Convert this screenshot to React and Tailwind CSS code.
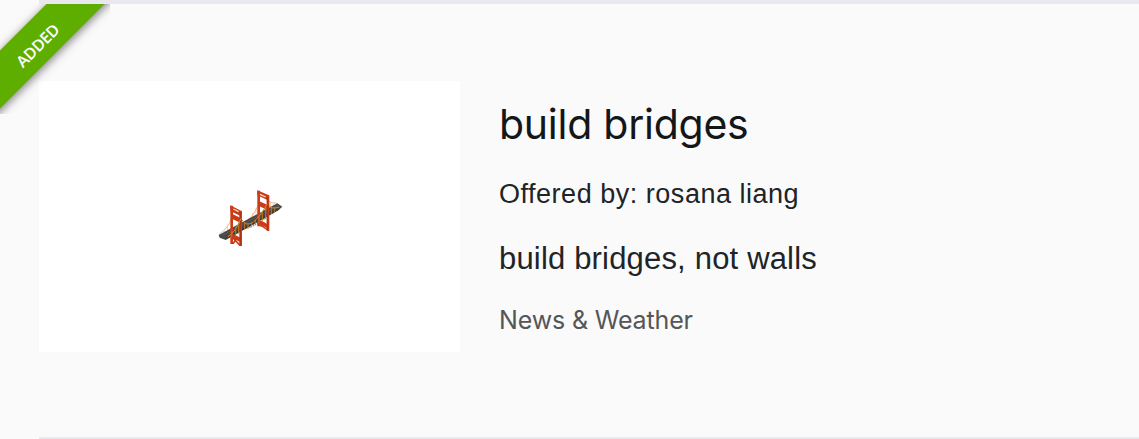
function BridgeIcon() {
  return (
    <svg width="80" height="75" viewBox="0 0 240 225" fill="none" className="mt-[3px] ml-px">
      {/* far cables */}
      <path d="M27 160Q54 142 65 112M97 130Q132 108 145 70M174 60Q190 68 200 66" stroke="#f5b87c" strokeWidth="3" />
      <path d="M43 150v10M53 138v18M106 123v10M117 110v16M128 97v22M138 82v28M182 65v18M190 68v12" stroke="#f0b077" strokeWidth="2" />

      {/* deck */}
      <path d="M26 162L202 67L217 77L205 88L47 177L29 170Z" fill="#484848" />
      <path d="M36 164L204 73" stroke="#5c5650" strokeWidth="3" />
      <path d="M47 173L207 84" stroke="#343a3d" strokeWidth="4" />

      {/* towers */}
      <path d="M65 74V189M92 91V195M146 29V136M174 43V150" stroke="#cb3b18" strokeWidth="8" />
      <path d="M61 73L96 91V107L61 90ZM67 99L94 112V127L67 114ZM142 28L177 43V59L142 43ZM148 61L175 73V88L148 76Z" fill="#cb3b18" />
      <path d="M67 158L92 170V184L67 171ZM148 116L173 130V142L148 129Z" fill="#cb3b18" />
      <path d="M69 171L90 193M80 172L69 188M150 131L171 145M163 125L151 136" stroke="#cb3b18" strokeWidth="5" />
      <path d="M70 84l16 8M150 40l17 8" stroke="#f8ddd2" strokeWidth="4" />
      <path d="M91 94V193M172 48V147" stroke="#972e16" strokeWidth="2" />

      {/* near cables and hangers */}
      <path d="M53 168Q77 153 93 112M96 117Q108 137 129 124Q151 107 172 68M177 74Q185 86 208 78" stroke="#d58a2b" strokeWidth="3" />
      <path d="M65 151v18M77 137v26M86 125v33M104 127v18M114 130v14M125 126v13M136 117v16M147 104v23M157 93v29M167 76v38M184 81v18M193 80v14" stroke="#c3781f" strokeWidth="3" />
      <path d="M108 132v12M120 129v12M131 121v15M142 112v19M162 85v32M189 83v15" stroke="#403c31" strokeWidth="2" />
    </svg>
  );
}

function AddedRibbon() {
  return (
    <div className="absolute left-0 top-0 h-[110px] w-[110px] overflow-hidden">
      <div className="absolute left-[-62px] top-[17px] flex h-[41px] w-[200px] -rotate-45 items-center justify-center bg-[#5eae00] shadow-[0_2px_10px_rgba(0,0,0,0.5)]">
        <span className="relative left-[-3px] top-[2px] font-['Open_Sans',sans-serif] text-[16px] font-semibold leading-none tracking-[-0.3px] text-white">
          ADDED
        </span>
      </div>
    </div>
  );
}

export default function App() {
  return (
    <div className="flex h-[439px] w-full flex-col overflow-hidden bg-[#fafafa]">
      <div className="ml-[39px] h-1 shrink-0 bg-[#e8e8ee]" />
      <div className="relative flex h-[433px] shrink-0 pl-[39px] pt-[77px]">
        <div className="flex h-[271px] w-[421px] shrink-0 items-center justify-center bg-white">
          <BridgeIcon />
        </div>
        <div className="ml-[39px] flex flex-col whitespace-nowrap pt-[18px] text-[#202427]">
          <h1 className="h-[50px] font-[Inter,sans-serif] text-[41px] leading-[50px] tracking-[-0.25px] text-[#141618]">build bridges</h1>
          <p className="mt-[27px] h-9 font-['Liberation_Sans',sans-serif] text-[27px] leading-9 tracking-[0.52px]">Offered by: rosana liang</p>
          <p className="mt-[29px] h-9 font-['Liberation_Sans',sans-serif] text-[31px] leading-9 tracking-[0.18px]">build bridges, not walls</p>
          <p className="mt-[27px] h-8 font-[Inter,sans-serif] text-[25px] leading-8 tracking-[-0.15px] text-[#555657]">News &amp; Weather</p>
        </div>
        <AddedRibbon />
      </div>
      <div className="ml-[39px] h-0.5 shrink-0 bg-[#e8e8ee]" />
    </div>
  );
}
